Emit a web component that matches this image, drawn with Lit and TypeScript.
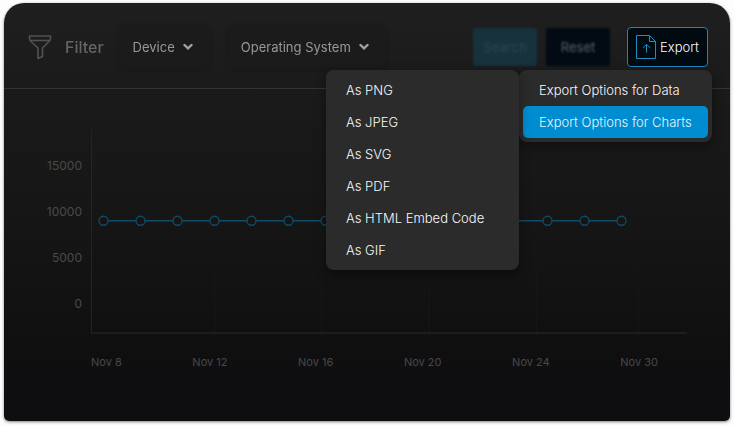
import { LitElement, html, svg, css } from "lit";
import { customElement, property, state } from "lit/decorators.js";
import { classMap } from "lit/directives/class-map.js";

@customElement("filter-select")
class FilterSelect extends LitElement {
  @property() label = "";

  static styles = css`
    :host {
      display: block;
    }
    .field {
      display: flex;
      align-items: center;
      height: 40px;
      box-sizing: border-box;
      border-radius: 5px;
      padding: 0 16px 0 12px;
      gap: 8px;
      background: #1b1b1b;
      box-shadow: 0 0 5px #161616, inset 0 0 2px #242424;
    }
    select {
      appearance: none;
      border: 0;
      margin: 0;
      padding: 0;
      background: transparent;
      color: #989898;
      font: 400 13px/20px Inter, "Liberation Sans", sans-serif;
      field-sizing: content;
      filter: blur(0.7px);
      outline: none;
    }
    svg {
      width: 10px;
      height: 8px;
      flex: none;
      filter: blur(0.3px);
      pointer-events: none;
    }
  `;

  render() {
    return html`
      <label class="field">
        <select aria-label=${this.label}>
          <option>${this.label}</option>
        </select>
        <svg viewBox="0 0 10 8" fill="none" stroke="#a2a2a2" stroke-width="2.4" stroke-linecap="round">
          <path d="M1.5 2 L5 5.4 L8.5 2" />
        </svg>
      </label>
    `;
  }
}

@customElement("line-chart")
class LineChart extends LitElement {
  @property({ type: Array }) ticks: number[] = [15000, 10000, 5000, 0];
  @property({ type: Array }) days: string[] = ["Nov 8", "Nov 12", "Nov 16", "Nov 20", "Nov 24", "Nov 30"];
  @property({ type: Array }) values: number[] = Array(15).fill(9050);

  static styles = css`
    :host {
      display: grid;
      grid-template-columns: 50px 1fr;
      column-gap: 9px;
      padding: 40px 43px 0 28px;
      color: #4a4a4a;
      font: 400 12px/20px Inter, "Liberation Sans", sans-serif;
    }
    .ticks {
      display: flex;
      flex-direction: column;
      gap: 26px;
      padding-top: 27px;
      text-align: right;
    }
    .plot {
      display: block;
      width: 100%;
      height: 208px;
      overflow: visible;
    }
    .days {
      grid-column: 2;
      display: flex;
      justify-content: space-between;
      padding: 15px 29px 0 0;
      color: #48484a;
      font-size: 11px;
    }
  `;

  render() {
    const x = (i: number) => 2.1 + i * 6.208;
    const y = (v: number) => 175 - (v / 5000) * 46;
    const last = this.values.length - 1;
    return html`
      <div class="ticks">${this.ticks.map((t) => html`<span>${t}</span>`)}</div>
      <svg class="plot" role="img" aria-label="Visits per day">
        <g stroke="#171717">
          ${[20.8, 38.7, 56.8, 74.7, 91.8].map(
            (p) => svg`<line x1="${p}%" x2="${p}%" y1="100" y2="206" />`
          )}
        </g>
        <g fill="#242424">
          <rect x="0" y="0" width="1" height="205" />
          <rect x="0" y="203" width="100%" height="2" fill="#1d1d1d" />
        </g>
        <g fill="none" stroke="#114b67" stroke-width="1.3">
          ${this.values.slice(0, last).map(
            (v, i) => svg`<line x1="${x(i)}%" y1=${y(v)} x2="${x(i + 1)}%" y2=${y(this.values[i + 1])} />`
          )}
          ${this.values.map(
            (v, i) => svg`<circle cx="${x(i)}%" cy=${y(v)} r="4.5" fill="#151515" />`
          )}
        </g>
      </svg>
      <div class="days">${this.days.map((d) => html`<span>${d}</span>`)}</div>
    `;
  }
}

@customElement("export-menu")
class ExportMenu extends LitElement {
  @state() private selected = 1;

  private groups = ["Export Options for Data", "Export Options for Charts"];
  private formats = ["As PNG", "As JPEG", "As SVG", "As PDF", "As HTML Embed Code", "As GIF"];

  static styles = css`
    :host {
      display: block;
      position: relative;
    }
    button {
      font: 300 13px/20px Inter, "Liberation Sans", sans-serif;
      margin: 0;
      cursor: pointer;
    }
    .trigger {
      display: flex;
      align-items: center;
      gap: 4px;
      height: 40px;
      padding: 0 8px;
      border: 1px solid #1a87b8;
      border-radius: 4px;
      background: #010911;
      color: #ffffff;
    }
    .trigger svg {
      width: 20px;
      height: 24px;
      flex: none;
    }
    .menu {
      position: absolute;
      top: 43px;
      right: -4px;
      width: 193px;
      box-sizing: border-box;
      padding: 4px;
      border-radius: 8px;
      background: #2b2b2b;
      box-shadow: 0 4px 12px rgba(0, 0, 0, 0.4);
      z-index: 1;
    }
    .formats {
      top: 0;
      right: 100%;
    }
    .item {
      display: block;
      width: 100%;
      height: 32px;
      padding: 0 16px;
      border: 0;
      border-radius: 5px;
      background: none;
      color: #fafafa;
      text-align: left;
      white-space: nowrap;
    }
    .active {
      background: #008cd0;
      color: #e6f6fe;
    }
  `;

  render() {
    return html`
      <button class="trigger" aria-haspopup="menu" aria-expanded="true">
        <svg viewBox="0 0 20 24" fill="none" stroke="#1c8fc4">
          <path d="M.5 .5 H13.5 L19.5 6.5 V23.5 H.5 Z M13.5 .5 V6.5 H19.5" />
          <path d="M10.5 17.5 V9.5 M7 12.8 L10.5 9.3 L14 12.8" />
        </svg>
        Export
      </button>
      <div class="menu" role="menu">
        ${this.groups.map(
          (g, i) => html`<button
            role="menuitem"
            class=${classMap({ item: true, active: i === this.selected })}
            @click=${() => (this.selected = i)}
          >${g}</button>`
        )}
        <div class="menu formats" role="menu">
          ${this.formats.map((f) => html`<button role="menuitem" class="item">${f}</button>`)}
        </div>
      </div>
    `;
  }
}

@customElement("app-root")
class AppRoot extends LitElement {
  static styles = css`
    :host {
      display: block;
      min-height: 100vh;
      box-sizing: border-box;
      padding: 3px 4px 5px;
      background: #fdfdfd;
      font-family: Inter, "Liberation Sans", sans-serif;
    }
    .card {
      min-height: calc(100vh - 8px);
      border-radius: 20px 20px 5px 5px;
      background: linear-gradient(#1f1f1f, #1a1a1a 22%, #161616 50%, #0f0f10 84%, #0e0e10);
      box-shadow: 0 1px 3px rgba(0, 0, 0, 0.5);
    }
    .bar {
      display: flex;
      align-items: center;
      height: 85px;
      padding: 3px 22px 0 24px;
      box-sizing: border-box;
    }
    .rule {
      height: 1px;
      margin: 0;
      border: 0;
      background: #353535;
    }
    .title {
      display: flex;
      align-items: center;
      gap: 13px;
      margin: 0 17px 0 0;
      color: #646464;
      font-size: 16px;
      line-height: 24px;
      font-weight: 500;
      filter: blur(0.7px);
    }
    .title svg {
      width: 24px;
      height: 26px;
    }
    .selects {
      display: flex;
      gap: 20px;
      margin-right: auto;
    }
    .action {
      height: 38px;
      padding: 0;
      width: 64px;
      margin-right: 9px;
      border: 0;
      border-radius: 3px;
      font: 500 13px/20px Inter, "Liberation Sans", sans-serif;
      filter: blur(1px);
      cursor: pointer;
    }
    .search {
      background: #17313d;
      color: #2c4350;
    }
    .reset {
      background: #020b14;
      color: #59616a;
      font-weight: 400;
      margin-right: 17px;
    }
  `;

  render() {
    return html`
      <main class="card">
        <header class="bar">
          <h1 class="title">
            <svg viewBox="0 0 24 26" fill="none" stroke="#525252" stroke-width="1.6" stroke-linejoin="round">
              <path d="M1.5 2 H22.5 V4.5 Q22.5 6 21 7.5 L14.5 14 V22.5 L10 24.5 V14 L3 7.5 Q1.5 6 1.5 4.5 Z" />
              <path d="M3 6.5 H21" />
            </svg>
            Filter
          </h1>
          <div class="selects">
            <filter-select label="Device"></filter-select>
            <filter-select label="Operating System"></filter-select>
          </div>
          <button class="action search">Search</button>
          <button class="action reset">Reset</button>
          <export-menu></export-menu>
        </header>
        <hr class="rule" />
        <line-chart></line-chart>
      </main>
    `;
  }
}
